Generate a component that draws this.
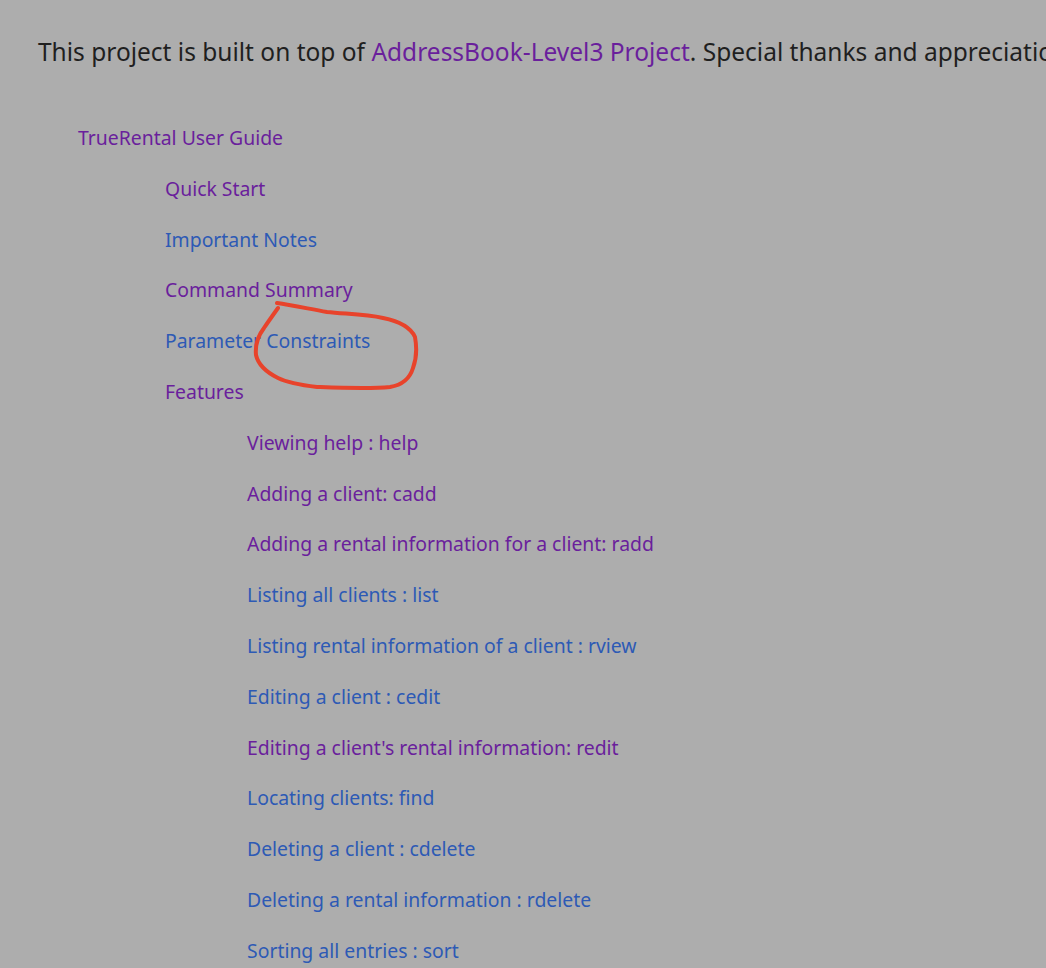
import React from 'react'

type Item = { label: string; visited?: boolean; children?: Item[] }

const toc: Item[] = [
  {
    label: 'TrueRental User Guide',
    visited: true,
    children: [
      { label: 'Quick Start', visited: true },
      { label: 'Important Notes' },
      { label: 'Command Summary', visited: true },
      { label: 'Parameter Constraints' },
      {
        label: 'Features',
        visited: true,
        children: [
          { label: 'Viewing help : help', visited: true },
          { label: 'Adding a client: cadd', visited: true },
          { label: 'Adding a rental information for a client: radd', visited: true },
          { label: 'Listing all clients : list' },
          { label: 'Listing rental information of a client : rview' },
          { label: 'Editing a client : cedit' },
          { label: "Editing a client's rental information: redit", visited: true },
          { label: 'Locating clients: find' },
          { label: 'Deleting a client : cdelete' },
          { label: 'Deleting a rental information : rdelete' },
          { label: 'Sorting all entries : sort' },
        ],
      },
    ],
  },
]

function TocList({ items, level }: { items: Item[]; level: number }) {
  const indent = level === 0 ? 'pl-[78px]' : level === 1 ? 'pl-[87px]' : 'pl-[82px]'
  return (
    <ul className={indent}>
      {items.map(item => (
        <li key={item.label}>
          <a
            href="#"
            className={`block leading-[50.8px] whitespace-nowrap ${item.visited ? 'text-[#6a1f9c]' : 'text-[#2d5ab5]'}`}
          >
            {item.label}
          </a>
          {item.children && <TocList items={item.children} level={level + 1} />}
        </li>
      ))}
    </ul>
  )
}

export default function App() {
  return (
    <div className="relative min-h-[968px] w-full overflow-hidden bg-[#adadad] font-['Noto_Sans',sans-serif]">
      <p className="whitespace-nowrap pl-[38px] pt-[30px] text-[24.5px] leading-[44px] text-[#1f1f1f]">
        This project is built on top of{' '}
        <a href="#" className="text-[#6a1f9c]">AddressBook-Level3 Project</a>. Special thanks and appreciation
      </p>
      <div className="pt-[39px] text-[19.4px]">
        <TocList items={toc} level={0} />
      </div>

      <svg
        className="pointer-events-none absolute left-0 top-0"
        width="1046"
        height="968"
        viewBox="0 0 1046 968"
      >
        <path
          d="M277 303 C 290 305, 305 308, 327 312 C 345 314, 365 314, 383 318 C 398 321, 410 326, 415 337 C 417 348, 416 360, 413 368 C 410 378, 402 385, 390 387 C 370 389, 345 388, 317 387 C 300 385, 288 383, 278 378 C 266 372, 258 364, 256 355 C 255 345, 258 336, 264 328 C 268 322, 273 315, 278 308"
          fill="none"
          stroke="#e8432b"
          strokeWidth="4"
          strokeLinecap="round"
        />
      </svg>
    </div>
  )
}
